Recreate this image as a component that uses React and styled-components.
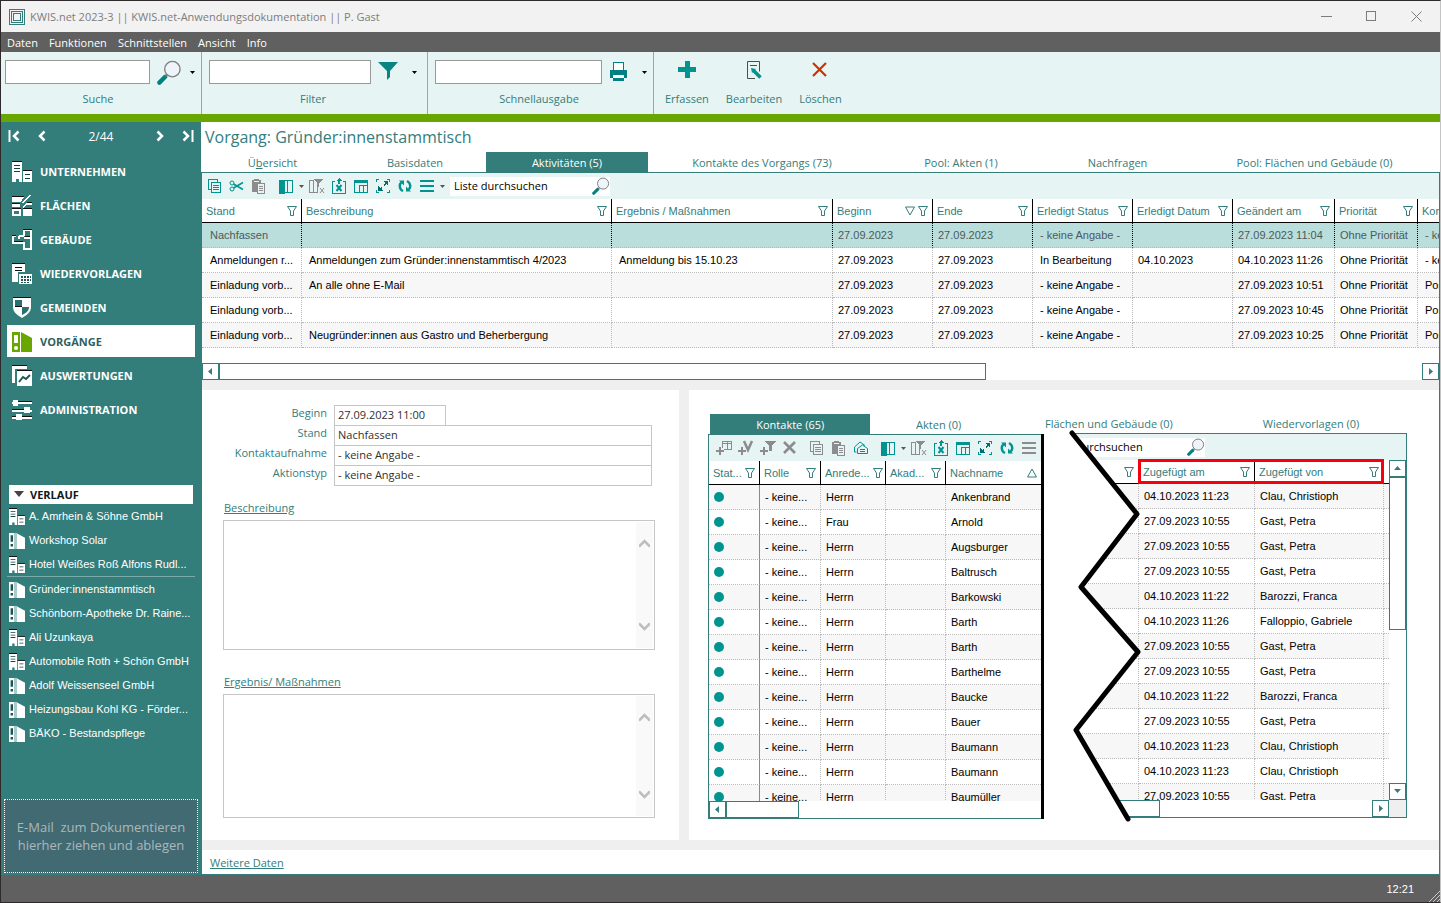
import React from "react";
import styled, { createGlobalStyle, css } from "styled-components";

const teal = "#337d7b";
const iconTeal = "#009490";
const pale = "#e6f4f4";
const uiFont = `"Open Sans", "Noto Sans", sans-serif`;
const gridFont = `"Liberation Sans", Arial, sans-serif`;

const GlobalStyle = createGlobalStyle`
  * {
    box-sizing: border-box;
  }
  body {
    margin: 0;
    background: #ffffff;
    font-family: ${uiFont};
    font-size: 11px;
  }
  button, input, textarea {
    font-family: inherit;
    font-size: inherit;
    color: inherit;
    border-radius: 0;
    margin: 0;
  }
  button {
    background: none;
    border: 0;
    padding: 0;
  }
  svg {
    display: block;
    flex: none;
  }
`;

/* ---------- window frame ---------- */

const Window = styled.div`
  min-height: 100vh;
  display: flex;
  flex-direction: column;
  border: 1px solid #2e2a2c;
  border-right-color: #c4c4c4;
  overflow: hidden;
`;

const TitleBar = styled.header`
  height: 31px;
  background: #f2f2f2;
  color: #7d7d7d;
  display: flex;
  align-items: center;
  padding: 0 1px 0 8px;
`;

const TitleText = styled.span`
  flex: 1;
  margin-left: 5px;
`;

const WindowButton = styled.button`
  width: 45px;
  height: 31px;
  display: flex;
  align-items: center;
  justify-content: center;
`;

const MenuBar = styled.nav`
  height: 20px;
  background: #606060;
  color: #ffffff;
  display: flex;
  align-items: center;
  gap: 11px;
  padding-left: 6px;
`;

const Ribbon = styled.div`
  display: flex;
  height: 70px;
  background: ${pale};
  border-bottom: 8px solid #69a600;
  color: ${teal};
`;

const RibbonGroup = styled.div`
  width: ${(props) => props.$width}px;
  padding: 8px 0 0 ${(props) => props.$indent}px;
  border-right: 1px solid #a3a3a3;
`;

const RibbonRow = styled.div`
  display: flex;
  align-items: center;
  height: 24px;
`;

const RibbonInput = styled.input`
  width: ${(props) => props.$width}px;
  height: 24px;
  background: #ffffff;
  border: 1px solid #999999;
  margin-right: 7px;
`;

const RibbonLabel = styled.label`
  display: block;
  text-align: center;
  line-height: 16px;
  margin-top: 7px;
  padding-right: 10px;
`;

const RibbonArrow = styled.button`
  width: 8px;
  margin-left: ${(props) => props.$gap}px;
`;

const RibbonActions = styled.div`
  display: flex;
  align-items: flex-start;
  gap: 17px;
  padding: 8px 0 0 11px;
`;

const RibbonButton = styled.button`
  display: flex;
  flex-direction: column;
  align-items: center;
  line-height: 16px;
  gap: 11px;
  svg {
    height: 20px;
  }
`;

const Body = styled.div`
  flex: 1;
  display: flex;
  background: #ffffff;
`;

const StatusBar = styled.footer`
  height: 27px;
  background: #606060;
  color: #ffffff;
  display: flex;
  align-items: center;
  justify-content: flex-end;
  gap: 12px;
  font-family: ${gridFont};
`;

/* ---------- sidebar ---------- */

const Sidebar = styled.aside`
  width: 200px;
  flex: none;
  background: ${teal};
  color: #ffffff;
  display: flex;
  flex-direction: column;
`;

const Pager = styled.div`
  display: flex;
  align-items: center;
  height: 28px;
  padding: 0 7px;
  font-size: 12px;
  margin-bottom: 4px;
`;

const PagerButton = styled.button`
  width: 12px;
  margin-right: ${(props) => props.$gap || 0}px;
`;

const PagerText = styled.span`
  flex: 1;
  text-align: center;
`;

const NavItem = styled.button`
  display: flex;
  align-items: center;
  gap: 8px;
  height: 32px;
  margin: 1px 6px;
  padding-left: 5px;
  font-weight: 700;
  background: ${(props) => (props.$active ? "#ffffff" : "none")};
  color: ${(props) => (props.$active ? "#2f5f5e" : "#ffffff")};
`;

const HistoryHead = styled.button`
  display: flex;
  align-items: center;
  gap: 6px;
  height: 19px;
  margin: 59px 8px 0;
  padding: 0 0 1px 5px;
  background: #ffffff;
  color: #10181c;
  font-weight: 700;
`;

const HistoryItem = styled.a`
  display: flex;
  align-items: center;
  gap: 4px;
  height: 24px;
  padding-left: 8px;
  color: #ffffff;
  text-decoration: none;
  white-space: nowrap;
  font-family: ${gridFont};
`;

const HistoryRule = styled.div`
  height: 1px;
  margin: 0 6px;
  background: #79a9a8;
`;

const DropZone = styled.div`
  margin: auto 3px 2px;
  height: 74px;
  border: 1px dotted #ffffff;
  background: #426a72;
  color: #aab8bc;
  display: flex;
  align-items: center;
  justify-content: center;
  text-align: center;
  white-space: pre;
  font-size: 13px;
  line-height: 18px;
`;

/* ---------- main area ---------- */

const Main = styled.main`
  flex: 1;
  min-width: 0;
  display: flex;
  flex-direction: column;
  color: ${teal};
`;

const PageTitle = styled.h1`
  margin: 0;
  padding-left: 4px;
  height: 30px;
  line-height: 30px;
  font-size: 16px;
  font-weight: 400;
`;

const Tabs = styled.div`
  display: grid;
  grid-template-columns: ${(props) => props.$columns};
  ${(props) =>
    props.$spread &&
    css`
      justify-content: space-between;
    `}
  height: 20px;
  padding: 0 ${(props) => props.$pad || 0}px;
`;

const Tab = styled.button`
  height: 20px;
  line-height: 20px;
  padding-top: 1px;
  white-space: nowrap;
  background: ${(props) => (props.$active ? teal : "none")};
  color: ${(props) => (props.$active ? "#ffffff" : teal)};
`;

const Workspace = styled.div`
  flex: 1;
  display: flex;
  flex-direction: column;
  border: 1px solid ${teal};
`;

const ToolBar = styled.div`
  display: flex;
  align-items: center;
  height: 26px;
  background: ${pale};
  padding-left: ${(props) => props.$pad || 0}px;
`;

const ToolButton = styled.button`
  width: 22px;
  height: 22px;
  flex: none;
  display: flex;
  align-items: center;
  justify-content: center;
  color: ${(props) => (props.$off ? "#8c8c8c" : iconTeal)};
`;

const ToolArrow = styled.button`
  width: 9px;
  flex: none;
  display: flex;
  justify-content: center;
`;

const ToolGap = styled.span`
  width: 5px;
  flex: none;
`;

const ListSearch = styled.label`
  width: 160px;
  height: 19px;
  display: flex;
  align-items: center;
  background: #ffffff;
  color: #000000;
  margin-left: ${(props) => props.$gap || 0}px;
`;

const ListSearchInput = styled.input`
  flex: 1;
  min-width: 0;
  height: 19px;
  border: 0;
  padding: 0 4px 2px;
  background: none;
  outline: 0;
`;

const GridBox = styled.div`
  overflow: hidden;
  height: ${(props) => props.$height}px;
`;

const Grid = styled.table`
  width: 100%;
  table-layout: fixed;
  border-collapse: separate;
  border-spacing: 0;
  font-family: ${gridFont};
  font-size: 11px;
`;

const Th = styled.th`
  height: 24px;
  padding: 0 4px;
  text-align: left;
  font-weight: 400;
  white-space: nowrap;
  overflow: hidden;
  border-right: 1px solid #000000;
  border-bottom: 1px solid #000000;
  &:last-child {
    border-right: 0;
  }
`;

const ThInner = styled.div`
  display: flex;
  align-items: center;
  gap: 3px;
`;

const ThText = styled.span`
  flex: 1;
`;

const Tr = styled.tr`
  background: ${(props) => (props.$selected ? "#b9dedc" : props.$alt ? "#f7f7f7" : "#ffffff")};
  color: ${(props) => (props.$selected ? "#4d5a5a" : "#000000")};
`;

const Td = styled.td`
  height: 25px;
  padding: 0 0 0 ${(props) => props.$pad || 5}px;
  white-space: nowrap;
  overflow: hidden;
  border-bottom: 1px dotted #b9b9b9;
  border-right: 1px ${(props) => (props.$solid ? "solid #8a8a8a" : "dotted #b9b9b9")};
  ${Tr}:first-child & {
    border-right-color: ${(props) => (props.$dark ? "#000000" : "")};
  }
  &:last-child {
    border-right: 0;
  }
`;

const Dot = styled.span`
  display: block;
  width: 10px;
  height: 10px;
  border-radius: 5px;
  background: ${iconTeal};
`;

const HScroll = styled.div`
  display: flex;
  height: 17px;
  background: #ffffff;
`;

const ScrollButton = styled.button`
  width: 17px;
  height: 17px;
  flex: none;
  display: flex;
  align-items: center;
  justify-content: center;
  border: 1px solid ${teal};
  background: #ffffff;
`;

const HThumb = styled.div`
  width: ${(props) => props.$width};
  border: 1px solid ${teal};
`;

const Spring = styled.span`
  flex: 1;
`;

const Splitter = styled.div`
  flex: none;
  height: 10px;
  background: #efefef;
`;

const Panels = styled.div`
  flex: 1;
  display: flex;
  gap: 10px;
  background: #efefef;
`;

const MoreLink = styled.a`
  align-self: flex-start;
  height: 24px;
  line-height: 25px;
  margin-left: 8px;
  color: ${teal};
`;

/* ---------- detail form ---------- */

const Form = styled.form`
  width: 477px;
  background: #ffffff;
  padding: 15px 24px 22px 21px;
`;

const FormRow = styled.div`
  display: grid;
  grid-template-columns: 104px 1fr;
  column-gap: 7px;
  height: 20px;
  padding-right: 3px;
`;

const FormLabel = styled.label`
  text-align: right;
  line-height: 16px;
`;

const FormInput = styled.input`
  width: ${(props) => props.$width || "100%"};
  height: 21px;
  border: 1px solid #c6c6c6;
  padding: 0 3px 2px;
  background: #ffffff;
  color: #303030;
  outline: 0;
`;

const MemoLabel = styled.label`
  display: block;
  width: fit-content;
  text-decoration: underline;
  line-height: 16px;
  margin: ${(props) => props.$top}px 0 4px 1px;
`;

const Memo = styled.div`
  display: flex;
  height: ${(props) => props.$height}px;
  border: 1px solid #c6c6c6;
  padding: 1px;
`;

const MemoText = styled.textarea`
  flex: 1;
  border: 0;
  resize: none;
  outline: 0;
  overflow: hidden;
`;

const MemoScroll = styled.div`
  width: 17px;
  background: #f9f9f9;
  display: flex;
  flex-direction: column;
  align-items: center;
  justify-content: space-between;
  padding: 17px 0;
`;

/* ---------- contacts ---------- */

const Contacts = styled.section`
  flex: 1;
  min-width: 0;
  background: #ffffff;
  display: flex;
  padding: 0 32px 21px 19px;
`;

const LeftPart = styled.div`
  flex: 1;
  min-width: 0;
  padding-top: 24px;
`;

const LeftFrame = styled.div`
  border: solid ${teal};
  border-width: 1px 0 1px 1px;
  box-shadow: 3px 0 0 #000000;
  margin-right: 4px;
  overflow: clip;
  overflow-clip-margin: 3px;
`;

const RightPart = styled.div`
  position: relative;
  width: 362px;
  flex: none;
  padding-top: 23px;
`;

const RightFrame = styled.div`
  border: solid ${teal};
  border-width: 1px 1px 1px 0;
  clip-path: polygon(27px 0, 92px 81px, 36px 154px, 93px 219px, 31px 297px, 83px 100%, 100% 100%, 100% 0);
`;

const Split = styled.div`
  display: flex;
`;

const GridColumn = styled.div`
  flex: 1;
  min-width: 0;
`;

const VScroll = styled.div`
  width: 17px;
  display: flex;
  flex-direction: column;
`;

const VThumb = styled.div`
  height: 153px;
  border: 1px solid ${teal};
`;

const Corner = styled.div`
  width: 17px;
  height: 17px;
  background: #efefef;
`;

const TearLine = styled.svg`
  position: absolute;
  left: 20px;
  top: 38px;
`;

const Marker = styled.div`
  position: absolute;
  left: 93px;
  top: 69px;
  width: 246px;
  height: 25px;
  border: 3px solid #f5000c;
`;

/* ---------- icons ---------- */

const Icon = ({ w = 16, h = 16, children }) => (
  <svg width={w} height={h} viewBox={`0 0 ${w} ${h}`} fill="none" stroke="currentColor" shapeRendering="crispEdges">
    {children}
  </svg>
);

const LogoIcon = () => (
  <Icon>
    <g stroke="#337d7b">
      <rect x=".5" y=".5" width="15" height="15" />
      <rect x="2.5" y="2.5" width="11" height="11" />
      <rect x="4.5" y="4.5" width="7" height="7" />
    </g>
  </Icon>
);

const ArrowIcon = ({ dir = "down", color = "#000000" }) => {
  const paths = {
    down: "M0 1h7L3.500 5z",
    up: "M0 5h7L3.500 1z",
    left: "M5 0v7L1 3.500z",
    right: "M2 0v7L6 3.500z",
  };
  return (
    <svg width="7" height="7" viewBox="0 0 7 7">
      <path d={paths[dir]} fill={color} />
    </svg>
  );
};

const SmallArrow = ({ color = "#000000" }) => (
  <svg width="5" height="3" viewBox="0 0 5 3">
    <path d="M0 0h5L2.500 3z" fill={color} />
  </svg>
);

const Lens = ({ size = 25 }) => (
  <svg width={size} height={size} viewBox="0 0 26 26" fill="none">
    <path d="M2.500 23.500L8.500 17.500" stroke="#008080" strokeWidth="4.500" strokeLinecap="round" />
    <path d="M8.500 17.500l2.500-2.500" stroke="#777" strokeWidth="1.500" />
    <circle cx="16" cy="9.500" r="8" fill="#eff4fb" stroke="#7d7d7d" strokeWidth="1.400" />
  </svg>
);

const FunnelBig = () => (
  <svg width="20" height="20" viewBox="0 0 20 20">
    <path d="M0 0h20l-8 9v6l-3 3V9z" fill="#088482" />
  </svg>
);

const PrinterIcon = () => (
  <Icon w={18} h={22}>
    <rect x="4.500" y="1.500" width="10" height="9" fill="#fff" stroke="#008080" />
    <path d="M1 9h17v8h-3v-3H4v3H1z" fill="#008080" stroke="none" />
    <path d="M4 17h11v3H4z" fill="#008080" stroke="none" />
    <path d="M5 14h9v3H5z" fill="#fff" stroke="none" />
  </Icon>
);

const PlusIcon = () => (
  <Icon w={18} h={20}>
    <path d="M9 1v17M0 9.500h18" stroke="#009490" strokeWidth="5" />
  </Icon>
);

const EditIcon = () => (
  <svg width="17" height="20" viewBox="0 0 17 20" fill="none">
    <path d="M9 18.500H1.500v-17h12v10M4 5.500h7" stroke="#4d4d4d" />
    <path d="M7.500 10.500l7 7" stroke="#009490" strokeWidth="3.500" />
    <path d="M5 8l5 1-4 4z" fill="#009490" />
  </svg>
);

const DeleteIcon = () => (
  <svg width="18" height="20" viewBox="0 0 18 20">
    <path d="M1 3l13 13M14 3L1 16" stroke="#cc3300" strokeWidth="2.200" />
  </svg>
);

const ChevronIcon = ({ back, bar }) => (
  <svg width="12" height="12" viewBox="0 0 12 12" fill="none" stroke="#fff">
    {back ? <path d="M10.500 1.500L6 6l4.500 4.500" strokeWidth="2.500" /> : <path d="M1.500 1.500L6 6l-4.500 4.500" strokeWidth="2.500" />}
    {bar && <path d={back ? "M1.500 0v12" : "M10.500 0v12"} strokeWidth="2" />}
  </svg>
);

const navIcons = {
  company: (
    <>
      <path d="M0 1h10v20H7v-3H4v3H0zM11 10h9v11h-9z" fill="#fff" />
      <path d="M2 4h6v1H2zM2 7h6v1H2zM2 10h6v1H2zM13 13h5v1h-5zM13 17h5v1h-5z" fill="#12403f" />
      <path d="M0 0h10v1H0zM11 9h9v1h-9z" fill="#111" />
    </>
  ),
  areas: (
    <>
      <path d="M0 2h12l-3 5H0zM0 9h8v3H0zM0 14h9v7H0zM11 11l4-3h5v2h-5l-4 3zM11 14h9v7h-9zM17 0h3l-9 8H9z" fill="#fff" />
      <path d="M0 1h12v1H0zM0 8h8v1H0zM0 13h9v1H0zM11 13h9v1h-9zM15 7h5v1h-5z" fill="#111" />
      <path d="M2 16h5v3H2z" fill="#337d7b" />
    </>
  ),
  building: (
    <>
      <path d="M12 7V1h7v19h-7v-6H1V7h3M7 7h5M7 7v3M12 9h7M12 13v3" stroke="#fff" strokeWidth="2" />
      <path d="M11 0h9v1h-9zM13 7h5v1h-5zM2 12h9v1H2zM0 6h4v1H0z" fill="#111" />
    </>
  ),
  followup: (
    <>
      <path d="M0 1h13v8H6v10H0z" fill="#fff" />
      <path d="M3 4h7v1H3zM3 7h7v1H3zM0 0h13v1H0z" fill="#111" />
      <path d="M7 11h13v10H7z" fill="#fff" />
      <path d="M9 13h2v2H9zM12 13h2v2h-2zM15 13h2v2h-2zM9 16h2v2H9zM12 16h2v2h-2zM15 16h2v2h-2zM9 19h2v1H9zM12 19h2v1h-2zM15 19h2v1h-2zM18 13h1v2h-1zM18 16h1v2h-1z" fill="#215453" />
    </>
  ),
  shield: (
    <>
      <path d="M1 1h18v9c0 5-4 8-9 11C5 18 1 15 1 10z" fill="#fff" shapeRendering="auto" />
      <path d="M3 3h7v7H3zM10 10h7c0 4-3 6-7 8z" fill="#2b6f6e" shapeRendering="auto" />
      <path d="M1 0h18v1H1zM3 9h7v1H3z" fill="#111" />
    </>
  ),
  process: (
    <>
      <path d="M0 1h8v20H0zM9 1l11 6v14H9z" fill="#69a600" shapeRendering="auto" />
      <path d="M2 4h4v8H2z" fill="#fff" />
      <circle cx="4" cy="17" r="2" fill="#fff" shapeRendering="auto" />
    </>
  ),
  report: (
    <>
      <path d="M0 1h15v3H3v14H0z" fill="#fff" />
      <path d="M5 6h15v15H5z" fill="#fff" />
      <path d="M0 0h15v1H0zM5 5h15v1H5z" fill="#111" />
      <path d="M7 17l4-5 3 2 4-4" stroke="#215453" strokeWidth="2" shapeRendering="auto" />
    </>
  ),
  admin: (
    <>
      <path d="M0 3h20v2H0zM0 11h20v2H0zM0 18h20v2H0z" fill="#fff" />
      <path d="M6 2h14v1H6zM0 10h12v1H0zM0 17h4v1H0zM10 17h10v1H10z" fill="#111" />
      <path d="M1 1h5v6H1zM12 8h6v6h-6zM4 15h6v6H4z" fill="#fff" />
    </>
  ),
  file: (
    <>
      <path d="M0 1h7v20H0zM9 1l11 6v14H9z" fill="#fff" shapeRendering="auto" />
      <path d="M2 4h3v8H2zM2 15h3v3H2z" fill="#215453" />
      <path d="M7 1h3v20H7z" fill="#a9cccb" />
    </>
  ),
};

const NavIcon = ({ name, size = 20 }) => (
  <svg width={size} height={size + 1} viewBox="0 0 20 21" fill="none" shapeRendering={size === 20 ? "crispEdges" : "auto"}>
    {navIcons[name]}
  </svg>
);

const toolIcons = {
  copy: (
    <>
      <path d="M3.500 11.500h-2v-10h9v2" />
      <path d="M4.500 4.500h9v10h-9zM6 7.500h6M6 9.500h6M6 11.500h6" />
    </>
  ),
  cut: (
    <g shapeRendering="auto">
      <circle cx="3" cy="5" r="2" />
      <circle cx="3" cy="11" r="2" />
      <path d="M4.500 6L14 11.500M4.500 10L14 4.500" strokeWidth="1.500" />
    </g>
  ),
  paste: (
    <>
      <path d="M1 2h2V1h5v1h2v3H6v9H1z" fill="currentColor" stroke="none" />
      <path d="M3 3.500h5" stroke="#e6f4f4" />
      <path d="M6.500 5.500h7v10h-7z" fill="#e6f4f4" />
      <path d="M8 8.500h4M8 10.500h4M8 12.500h4" />
    </>
  ),
  columns: (
    <>
      <path d="M1.500 2.500h13v12h-13zM9.500 2v13" />
      <path d="M1 2h5v13H1z" fill="currentColor" />
    </>
  ),
  clearFilter: (
    <>
      <path d="M.5 2.500h4v12h-4zM4.500 14.500h4v-6" />
      <path d="M4 1h10l-4 4v4H8V5z" fill="currentColor" stroke="none" />
      <path d="M11 10l4 5M15 10l-4 5" shapeRendering="auto" />
    </>
  ),
  excel: (
    <>
      <path d="M4 3.500H1.500v12h13v-12H12" />
      <path d="M5.500 7l5 6M10.500 7l-5 6" strokeWidth="2" shapeRendering="auto" />
      <path d="M8 0l3 3H9v3H7V3H5z" fill="currentColor" stroke="none" />
    </>
  ),
  layout: (
    <>
      <path d="M1.500 2.500h13v12h-13zM6.500 7v7M10.500 7v7M6 7.500h8" />
      <path d="M1 2h14v3H1z" fill="currentColor" stroke="none" />
    </>
  ),
  expand: (
    <>
      <path d="M1.500 4V1.500H4M12 1.500h2.500V4M14.500 12v2.500H12M4 14.500H1.500V12" />
      <path d="M13 3v5l-2-2-2 2V6l1-1-2-2zM3 13V8l2 2 2-2v2l-1 1 2 2z" fill="#00706d" stroke="none" />
    </>
  ),
  refresh: (
    <g shapeRendering="auto">
      <path d="M6 13C2 11 2 6 4.500 4.500M10 3c4 2 4 7 1.500 8.500" strokeWidth="2.400" />
      <path d="M2 2.500h5v5zM14 13.500H9v-5z" fill="currentColor" stroke="none" />
    </g>
  ),
  lines: <path d="M1 3h14M1 8h14M1 13h14" strokeWidth="2" />,
  addWindow: (
    <>
      <path d="M6.500 8V1.500h9v8H8M11.500 2v7M6 3.500h9" />
      <path d="M4 7v8M0 11h8" strokeWidth="2" />
    </>
  ),
  addCheck: (
    <>
      <path d="M6 1l4 9 4-9" strokeWidth="2.500" shapeRendering="auto" />
      <path d="M4 7v8M0 11h8" strokeWidth="2" />
    </>
  ),
  addFilter: (
    <>
      <path d="M4 1h12l-4 4v6h-3V5z" fill="currentColor" stroke="none" />
      <path d="M4 7v8M0 11h8" strokeWidth="2" />
    </>
  ),
  remove: <path d="M2 2l11 11M13 2L2 13" strokeWidth="2.600" shapeRendering="auto" />,
  mail: (
    <g shapeRendering="auto">
      <path d="M1.500 7L7 2l5 3.500M1.500 7v5h2" />
      <path d="M4.500 8.500v5h10v-5L9.500 5zM7 9.500h5M7 11.500h5" />
    </g>
  ),
};

const Tool = ({ name, off }) => (
  <ToolButton type="button" $off={off} aria-label={name}>
    <Icon>{toolIcons[name]}</Icon>
  </ToolButton>
);

const FilterIcon = () => (
  <svg width="10" height="10" viewBox="0 0 10 10" fill="none" stroke={teal}>
    <path d="M.5 .5h9L6.500 5V9.500h-3V5z" />
  </svg>
);

const SortIcon = ({ up }) => (
  <svg width="10" height="10" viewBox="0 0 10 10" fill="none" stroke={teal}>
    <path d={up ? "M.5 9h9L5 1z" : "M.5 1h9L5 9z"} />
  </svg>
);

const MemoChevron = ({ up }) => (
  <svg width="11" height="9" viewBox="0 0 11 9" fill="none" stroke="#bdbdbd" strokeWidth="2.500">
    <path d={up ? "M0 7.500L5.500 2 11 7.500" : "M0 1.500L5.500 7 11 1.500"} />
  </svg>
);

/* ---------- data ---------- */

const navigation = [
  ["company", "UNTERNEHMEN"],
  ["areas", "FLÄCHEN"],
  ["building", "GEBÄUDE"],
  ["followup", "WIEDERVORLAGEN"],
  ["shield", "GEMEINDEN"],
  ["process", "VORGÄNGE"],
  ["report", "AUSWERTUNGEN"],
  ["admin", "ADMINISTRATION"],
];

const recent = [
  ["company", "A. Amrhein & Söhne GmbH"],
  ["file", "Workshop Solar"],
  ["company", "Hotel Weißes Roß Alfons Rudl..."],
];

const older = [
  ["file", "Gründer:innenstammtisch"],
  ["file", "Schönborn-Apotheke Dr. Raine..."],
  ["company", "Ali Uzunkaya"],
  ["company", "Automobile Roth + Schön GmbH"],
  ["file", "Adolf Weissenseel GmbH"],
  ["file", "Heizungsbau Kohl KG - Förder..."],
  ["file", "BÄKO - Bestandspflege"],
];

const activityColumns = [
  { title: "Stand", width: 100, pad: 8 },
  { title: "Beschreibung", width: 310, pad: 7 },
  { title: "Ergebnis / Maßnahmen", width: 221, pad: 7 },
  { title: "Beginn", width: 100, sort: true },
  { title: "Ende", width: 100 },
  { title: "Erledigt Status", width: 100, pad: 7 },
  { title: "Erledigt Datum", width: 100 },
  { title: "Geändert am", width: 102 },
  { title: "Priorität", width: 83 },
  { title: "Kontakt", pad: 7, noFilter: true },
];

const none = "- keine Angabe -";
const day = "27.09.2023";
const activities = [
  ["Nachfassen", "", "", day, day, none, "", "27.09.2023 11:04", "Ohne Priorität", none],
  [
    "Anmeldungen r...",
    "Anmeldungen zum Gründer:innenstammtisch 4/2023",
    "Anmeldung bis 15.10.23",
    day,
    day,
    "In Bearbeitung",
    "04.10.2023",
    "04.10.2023 11:26",
    "Ohne Priorität",
    none,
  ],
  ["Einladung vorb...", "An alle ohne E-Mail", "", day, day, none, "", "27.09.2023 10:51", "Ohne Priorität", "Post"],
  ["Einladung vorb...", "", "", day, day, none, "", "27.09.2023 10:45", "Ohne Priorität", "Post"],
  [
    "Einladung vorb...",
    "Neugründer:innen aus Gastro und Beherbergung",
    "",
    day,
    day,
    none,
    "",
    "27.09.2023 10:25",
    "Ohne Priorität",
    "Post",
  ],
];

const contactColumns = [
  { title: "Stat...", width: 51, solid: true },
  { title: "Rolle", width: 61 },
  { title: "Anrede...", width: 65 },
  { title: "Akad...", width: 60 },
  { title: "Nachname", noFilter: true, sortUp: true },
];

const contacts = [
  ["Herrn", "Ankenbrand"],
  ["Frau", "Arnold"],
  ["Herrn", "Augsburger"],
  ["Herrn", "Baltrusch"],
  ["Herrn", "Barkowski"],
  ["Herrn", "Barth"],
  ["Herrn", "Barth"],
  ["Herrn", "Barthelme"],
  ["Herrn", "Baucke"],
  ["Herrn", "Bauer"],
  ["Herrn", "Baumann"],
  ["Herrn", "Baumann"],
  ["Herrn", "Baumüller"],
].map(([salutation, name]) => [<Dot />, "- keine...", salutation, "", name]);

const addedColumns = [
  { title: "", width: 94 },
  { title: "Zugefügt am", width: 116 },
  { title: "Zugefügt von", width: 129 },
  { title: "", noFilter: true },
];

const added = [
  ["04.10.2023 11:23", "Clau, Christioph"],
  ["27.09.2023 10:55", "Gast, Petra"],
  ["27.09.2023 10:55", "Gast, Petra"],
  ["27.09.2023 10:55", "Gast, Petra"],
  ["04.10.2023 11:22", "Barozzi, Franca"],
  ["04.10.2023 11:26", "Falloppio, Gabriele"],
  ["27.09.2023 10:55", "Gast, Petra"],
  ["27.09.2023 10:55", "Gast, Petra"],
  ["04.10.2023 11:22", "Barozzi, Franca"],
  ["27.09.2023 10:55", "Gast, Petra"],
  ["04.10.2023 11:23", "Clau, Christioph"],
  ["04.10.2023 11:23", "Clau, Christioph"],
  ["27.09.2023 10:55", "Gast, Petra"],
].map(([date, user]) => ["", date, user, ""]);

/* ---------- parts ---------- */

const DataGrid = ({ columns, rows, selectFirst }) => (
  <Grid>
    <colgroup>
      {columns.map((col, i) => (
        <col key={i} width={col.width} />
      ))}
    </colgroup>
    <thead>
      <tr>
        {columns.map((col, i) => (
          <Th key={i}>
            <ThInner>
              <ThText>{col.title}</ThText>
              {col.sort && <SortIcon />}
              {col.sortUp && <SortIcon up />}
              {!col.noFilter && <FilterIcon />}
            </ThInner>
          </Th>
        ))}
      </tr>
    </thead>
    <tbody>
      {rows.map((row, r) => (
        <Tr key={r} $selected={selectFirst && r === 0} $alt={r % 2 === 0}>
          {row.map((cell, c) => (
            <Td key={c} $pad={columns[c].pad} $solid={columns[c].solid} $dark={selectFirst}>
              {cell}
            </Td>
          ))}
        </Tr>
      ))}
    </tbody>
  </Grid>
);

const Search = ({ gap }) => (
  <ListSearch $gap={gap}>
    <ListSearchInput aria-label="Liste durchsuchen" defaultValue="Liste durchsuchen" />
    <Lens size={18} />
  </ListSearch>
);

const History = ({ items }) =>
  items.map(([icon, text]) => (
    <HistoryItem href="#" key={text}>
      <NavIcon name={icon} size={16} />
      {text}
    </HistoryItem>
  ));

const MemoField = ({ id, label, top, height }) => (
  <>
    <MemoLabel htmlFor={id} $top={top}>
      {label}
    </MemoLabel>
    <Memo $height={height}>
      <MemoText id={id} />
      <MemoScroll>
        <MemoChevron up />
        <MemoChevron />
      </MemoScroll>
    </Memo>
  </>
);

const Field = ({ id, label, value, width }) => (
  <FormRow>
    <FormLabel htmlFor={id}>{label}</FormLabel>
    <FormInput id={id} defaultValue={value} $width={width} />
  </FormRow>
);

export default () => {
  return (
    <>
      <GlobalStyle />
      <Window>
        <TitleBar>
          <LogoIcon />
          <TitleText>KWIS.net 2023-3 || KWIS.net-Anwendungsdokumentation || P. Gast</TitleText>
          <WindowButton aria-label="Minimieren">
            <Icon w={11} h={11}>
              <path d="M0 5.500h11" />
            </Icon>
          </WindowButton>
          <WindowButton aria-label="Maximieren">
            <Icon w={11} h={11}>
              <rect x=".5" y=".5" width="9" height="9" rx="1" />
            </Icon>
          </WindowButton>
          <WindowButton aria-label="Schließen">
            <svg width="11" height="11" viewBox="0 0 11 11" stroke="currentColor">
              <path d="M.5 .5l10 10M10.500 .5l-10 10" />
            </svg>
          </WindowButton>
        </TitleBar>
        <MenuBar>
          <button>Daten</button>
          <button>Funktionen</button>
          <button>Schnittstellen</button>
          <button>Ansicht</button>
          <button>Info</button>
        </MenuBar>
        <Ribbon>
          <RibbonGroup $width={201} $indent={4}>
            <RibbonRow>
              <RibbonInput id="search" $width={145} />
              <Lens />
              <RibbonArrow $gap={8} aria-label="Suche Optionen">
                <SmallArrow />
              </RibbonArrow>
            </RibbonRow>
            <RibbonLabel htmlFor="search">Suche</RibbonLabel>
          </RibbonGroup>
          <RibbonGroup $width={226} $indent={7}>
            <RibbonRow>
              <RibbonInput id="filter" $width={162} />
              <FunnelBig />
              <RibbonArrow $gap={14} aria-label="Filter Optionen">
                <SmallArrow />
              </RibbonArrow>
            </RibbonRow>
            <RibbonLabel htmlFor="filter">Filter</RibbonLabel>
          </RibbonGroup>
          <RibbonGroup $width={226} $indent={7}>
            <RibbonRow>
              <RibbonInput id="output" $width={167} />
              <PrinterIcon />
              <RibbonArrow $gap={15} aria-label="Schnellausgabe Optionen">
                <SmallArrow />
              </RibbonArrow>
            </RibbonRow>
            <RibbonLabel htmlFor="output">Schnellausgabe</RibbonLabel>
          </RibbonGroup>
          <RibbonActions>
            <RibbonButton>
              <PlusIcon />
              Erfassen
            </RibbonButton>
            <RibbonButton>
              <EditIcon />
              Bearbeiten
            </RibbonButton>
            <RibbonButton>
              <DeleteIcon />
              Löschen
            </RibbonButton>
          </RibbonActions>
        </Ribbon>
        <Body>
          <Sidebar>
            <Pager>
              <PagerButton $gap={14} aria-label="Erster">
                <ChevronIcon back bar />
              </PagerButton>
              <PagerButton aria-label="Zurück">
                <ChevronIcon back />
              </PagerButton>
              <PagerText>2/44</PagerText>
              <PagerButton $gap={14} aria-label="Weiter">
                <ChevronIcon />
              </PagerButton>
              <PagerButton aria-label="Letzter">
                <ChevronIcon bar />
              </PagerButton>
            </Pager>
            {navigation.map(([icon, text]) => (
              <NavItem key={text} $active={icon === "process"}>
                <NavIcon name={icon} />
                {text}
              </NavItem>
            ))}
            <HistoryHead>
              <svg width="10" height="6" viewBox="0 0 10 6">
                <path d="M0 0h10L5 6z" fill="#444" />
              </svg>
              VERLAUF
            </HistoryHead>
            <History items={recent} />
            <HistoryRule />
            <History items={older} />
            <DropZone>{"E-Mail  zum Dokumentieren\nhierher ziehen und ablegen"}</DropZone>
          </Sidebar>
          <Main>
            <PageTitle>Vorgang: Gründer:innenstammtisch</PageTitle>
            <Tabs $columns="143fr 142fr 162fr 228fr 170fr 143fr 251fr">
              <Tab>
                Ü<u>b</u>ersicht
              </Tab>
              <Tab>Basisdaten</Tab>
              <Tab $active>Aktivitäten (5)</Tab>
              <Tab>Kontakte des Vorgangs (73)</Tab>
              <Tab>Pool: Akten (1)</Tab>
              <Tab>Nachfragen</Tab>
              <Tab>Pool: Flächen und Gebäude (0)</Tab>
            </Tabs>
            <Workspace>
              <ToolBar $pad={2}>
                <Tool name="copy" />
                <Tool name="cut" />
                <Tool name="paste" off />
                <ToolGap />
                <Tool name="columns" />
                <ToolArrow aria-label="Spalten">
                  <SmallArrow color="#555" />
                </ToolArrow>
                <Tool name="clearFilter" off />
                <Tool name="excel" />
                <Tool name="layout" />
                <Tool name="expand" />
                <Tool name="refresh" />
                <Tool name="lines" />
                <ToolArrow aria-label="Ansicht">
                  <SmallArrow color="#555" />
                </ToolArrow>
                <Search gap={3} />
              </ToolBar>
              <GridBox $height={164}>
                <DataGrid columns={activityColumns} rows={activities} selectFirst />
              </GridBox>
              <HScroll>
                <ScrollButton aria-label="Nach links">
                  <ArrowIcon dir="left" color={teal} />
                </ScrollButton>
                <HThumb $width="62%" />
                <Spring />
                <ScrollButton aria-label="Nach rechts">
                  <ArrowIcon dir="right" color={teal} />
                </ScrollButton>
              </HScroll>
              <Splitter />
              <Panels>
                <Form>
                  <Field id="begin" label="Beginn" value="27.09.2023 11:00" width="112px" />
                  <Field id="state" label="Stand" value="Nachfassen" />
                  <Field id="contact" label="Kontaktaufnahme" value={none} />
                  <Field id="kind" label="Aktionstyp" value={none} />
                  <MemoField id="description" label="Beschreibung" top={15} height={130} />
                  <MemoField id="result" label="Ergebnis/ Maßnahmen" top={24} height={124} />
                </Form>
                <Contacts>
                  <LeftPart>
                    <Tabs $columns="160fr 136fr 36fr" $pad={2}>
                      <Tab $active>Kontakte (65)</Tab>
                      <Tab>Akten (0)</Tab>
                    </Tabs>
                    <LeftFrame>
                      <ToolBar $pad={4}>
                        <Tool name="addWindow" off />
                        <Tool name="addCheck" off />
                        <Tool name="addFilter" off />
                        <Tool name="remove" off />
                        <ToolGap />
                        <Tool name="copy" off />
                        <Tool name="paste" off />
                        <Tool name="mail" />
                        <ToolGap />
                        <Tool name="columns" />
                        <ToolArrow aria-label="Spalten">
                          <SmallArrow color="#555" />
                        </ToolArrow>
                        <Tool name="clearFilter" off />
                        <Tool name="excel" />
                        <Tool name="layout" />
                        <Tool name="expand" />
                        <Tool name="refresh" />
                        <Tool name="lines" off />
                      </ToolBar>
                      <GridBox $height={340}>
                        <DataGrid columns={contactColumns} rows={contacts} />
                      </GridBox>
                      <HScroll>
                        <ScrollButton aria-label="Nach links">
                          <ArrowIcon dir="left" color={teal} />
                        </ScrollButton>
                        <HThumb $width="73px" />
                      </HScroll>
                    </LeftFrame>
                  </LeftPart>
                  <RightPart>
                    <Tabs $columns="126px 192px" $spread>
                      <Tab>Flächen und Gebäude (0)</Tab>
                      <Tab>Wiedervorlagen (0)</Tab>
                    </Tabs>
                    <RightFrame>
                      <ToolBar>
                        <Search />
                      </ToolBar>
                      <Split>
                        <GridColumn>
                          <GridBox $height={340}>
                            <DataGrid columns={addedColumns} rows={added} />
                          </GridBox>
                        </GridColumn>
                        <VScroll>
                          <ScrollButton aria-label="Nach oben">
                            <ArrowIcon dir="up" color={teal} />
                          </ScrollButton>
                          <VThumb />
                          <Spring />
                          <ScrollButton aria-label="Nach unten">
                            <ArrowIcon color={teal} />
                          </ScrollButton>
                        </VScroll>
                      </Split>
                      <HScroll>
                        <HThumb $width="115px" />
                        <Spring />
                        <ScrollButton aria-label="Nach rechts">
                          <ArrowIcon dir="right" color={teal} />
                        </ScrollButton>
                        <Corner />
                      </HScroll>
                    </RightFrame>
                    <Marker />
                    <TearLine width="80" height="396" viewBox="0 0 80 396" fill="none">
                      <path
                        d="M7 5l65 81-56 73 57 65-62 78 52 89"
                        stroke="#000"
                        strokeWidth="5"
                        strokeLinecap="round"
                        strokeLinejoin="round"
                      />
                    </TearLine>
                  </RightPart>
                </Contacts>
              </Panels>
              <Splitter />
              <MoreLink href="#">Weitere Daten</MoreLink>
            </Workspace>
          </Main>
        </Body>
        <StatusBar>
          12:21
          <svg width="14" height="27" viewBox="0 0 14 27" stroke="#c9c9c9">
            <path d="M3 27L14 16M7 27l7-7M11 27l3-3" />
          </svg>
        </StatusBar>
      </Window>
    </>
  );
};
